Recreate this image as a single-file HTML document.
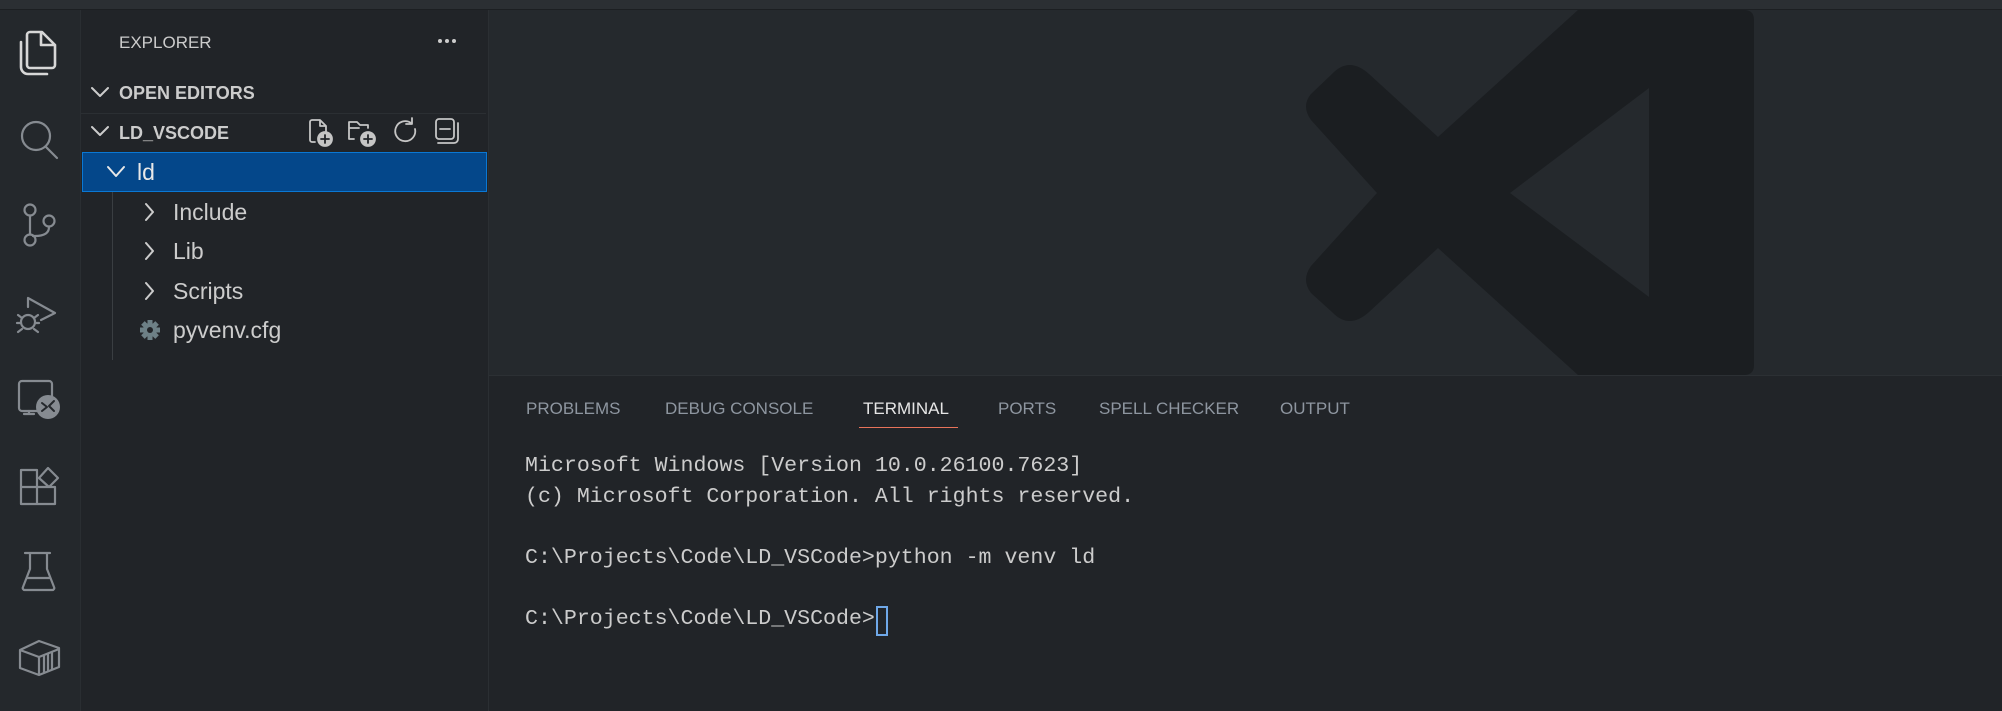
<!DOCTYPE html>
<html><head><meta charset="utf-8"><style>
*{margin:0;padding:0;box-sizing:border-box}
body{width:2002px;height:711px;overflow:hidden;background:#25292d;font-family:"Liberation Sans",sans-serif;position:relative}
.abs{position:absolute}
#top{left:0;top:0;width:2002px;height:10px;background:#2b2f33;border-bottom:1px solid #1c1f22}
#act{left:0;top:10px;width:81px;height:701px;background:#24282c;border-right:1px solid #2a2e32}
#side{left:81px;top:10px;width:408px;height:701px;background:#212428;border-right:1px solid #2b2f33}
#editor{left:489px;top:10px;width:1513px;height:365px;background:#25292d}
#panel{left:489px;top:375px;width:1513px;height:336px;background:#212428;border-top:1px solid #2c3034}
.t{position:absolute;white-space:nowrap;color:#cccccc;line-height:1}
.tab{position:absolute;top:24px;font-size:17px;color:#8e96a0;white-space:nowrap;line-height:1}
.term{position:absolute;left:36px;font-family:"Liberation Mono",monospace;font-size:21.6px;color:#cccccc;white-space:pre;line-height:1}
svg.ic{position:absolute}
</style></head><body>
<div id="top" class="abs"></div>
<div id="act" class="abs">
<svg class="ic" style="left:0;top:-10px" width="81" height="711" fill="none" stroke="#868b91" stroke-width="2.2" stroke-linejoin="round" stroke-linecap="round">
 <g stroke="#d7d7d7" stroke-width="2.6">
  <path d="M30 32 h12 l13 13 v20 a3 3 0 0 1 -3 3 h-22 a3 3 0 0 1 -3 -3 v-30 a3 3 0 0 1 3 -3 z M41 32 v13 h14 M21 42 v25 a7 7 0 0 0 7 7 h19"/>
 </g>
 <circle cx="36" cy="136" r="14"/><path d="M46 147 l11 11"/>
 <circle cx="30" cy="210" r="5.5"/><circle cx="30" cy="240" r="5.5"/><circle cx="49" cy="221" r="5.5"/><path d="M30 216 v18 M49 227 q0 9 -14 9 h-2"/>
 <path d="M28 298 l27 15 l-14 7 M28 298 v9"/><circle cx="28" cy="322" r="7"/><path d="M18 315 l4 3 M38 315 l-4 3 M17 323 h4 M35 323 h4 M18 332 l4 -3 M38 332 l-4 -3"/>
 <rect x="19" y="381" width="33" height="30" rx="3"/><path d="M24 414 h10 M29 411 v3"/>
 <circle cx="48" cy="407" r="12" fill="#868b91" stroke="none"/><path d="M42 403 l5 4 l-5 4 M54 401 l-5 5 l5 5" stroke="#24282c" stroke-width="2"/>
 <path d="M21 470 h16 v34 h-16 z M21 487 h34 v17 h-18 M55 487 v-0 M37 487 v17 M39 478 l9 -10 l10 10 l-9 9 z"/>
 <path d="M25 553 h25 M30 553 v16 l-7 18 a2 2 0 0 0 2 3 h27 a2 2 0 0 0 2 -3 l-7 -18 v-16 M27 578 h23"/>
 <path d="M20 650 l19 -9 l20 7 v19 l-20 8 l-19 -7 z M20 650 l19 7 l20 -8 M39 657 v18 M44 656 v16 M48 654 v16 M52 653 v16"/>
</svg>
</div>
<div id="side" class="abs">
 <div class="t" style="left:38px;top:24px;font-size:17px">EXPLORER</div>
 <svg class="ic" style="left:0;top:0" width="408" height="360" fill="none" stroke="#cccccc" stroke-width="2" stroke-linecap="round" stroke-linejoin="round">
  <g fill="#cccccc" stroke="none"><circle cx="359" cy="31" r="2"/><circle cx="366" cy="31" r="2"/><circle cx="373" cy="31" r="2"/></g>
  <path d="M11 78 l8 8 l8 -8 M11 117 l8 8 l8 -8 M65 194 l7 8 l-7 8 M65 233 l7 8 l-7 8 M65 273 l7 8 l-7 8"/>
  <g stroke="#c5c5c5" stroke-width="1.8">
   <path d="M229 130 v-18 a2 2 0 0 1 2 -2 h8 l6 6 v5 M239 110 v6 h6 M229 130 a2 2 0 0 0 2 2 h3"/><circle cx="244" cy="129" r="7" fill="#c5c5c5"/><path d="M240 129 h8 M244 125 v8" stroke="#212428"/>
   <path d="M268 129 v-17 h8 l3 3 h8 v3 M268 129 h5 M268 118 h10"/><circle cx="287" cy="129" r="7" fill="#c5c5c5"/><path d="M283 129 h8 M287 125 v8" stroke="#212428"/>
   <path d="M330 113 a10 10 0 1 0 4 6 M331 108 v6 h-6"/>
   <rect x="355" y="109" width="18" height="20" rx="3"/><path d="M359 119 h10 M377 113 v16 a4 4 0 0 1 -4 4 h-16"/>
  </g>
 </svg>
 <div class="t" style="left:38px;top:74px;font-size:18px;font-weight:bold">OPEN EDITORS</div>
 <div class="abs" style="left:0;top:103px;width:405px;height:1px;background:#2b2f33"></div>
 <div class="t" style="left:38px;top:114px;font-size:18px;font-weight:bold">LD_VSCODE</div>
 <div class="abs" style="left:1px;top:142px;width:405px;height:40px;background:#04478a;border:1px solid #0a78d4"></div>
 <svg class="ic" style="left:0;top:0" width="408" height="360" fill="none" stroke="#e8e8e8" stroke-width="2" stroke-linecap="round" stroke-linejoin="round"><path d="M27 157 l8 9 l8 -9"/></svg>
 <div class="t" style="left:56px;top:151px;font-size:23px;color:#e8e8e8">ld</div>
 <div class="abs" style="left:31px;top:182px;width:1px;height:168px;background:#3a3e42"></div>
 <div class="t" style="left:92px;top:191px;font-size:23px">Include</div>
 <div class="t" style="left:92px;top:230px;font-size:23px">Lib</div>
 <div class="t" style="left:92px;top:270px;font-size:23px">Scripts</div>
 <svg class="ic" style="left:58px;top:309px" width="22" height="22" viewBox="-11 -11 22 22">
  <g fill="#6d8086"><circle r="7"/><g><rect x="-2.5" y="-10" width="5" height="20"/><rect x="-2.5" y="-10" width="5" height="20" transform="rotate(45)"/><rect x="-2.5" y="-10" width="5" height="20" transform="rotate(90)"/><rect x="-2.5" y="-10" width="5" height="20" transform="rotate(135)"/></g></g>
  <circle r="3" fill="#212428"/>
 </svg>
 <div class="t" style="left:92px;top:309px;font-size:23px">pyvenv.cfg</div>
</div>
<div id="editor" class="abs">
 <svg class="ic" style="left:0;top:0" width="1513" height="365">
  <path fill="#1b1e21" fill-rule="evenodd" d="M1089 0 H1255 Q1265 0 1265 10 V355 Q1265 365 1255 365 H1089 L949 238 L880 302 Q860 320 843 302 L822 283 Q812 270 822 256 L888 183 L822 110 Q812 96 822 84 L843 64 Q860 46 880 64 L949 127 Z M1160 78 V287 L1021 183 Z"/>
 </svg>
</div>
<div id="panel" class="abs">
 <div class="tab" style="left:37px">PROBLEMS</div>
 <div class="tab" style="left:176px">DEBUG CONSOLE</div>
 <div class="tab" style="left:374px;color:#e6e6e6">TERMINAL</div>
 <div class="abs" style="left:370px;top:51px;width:99px;height:1px;background:#e8735a"></div>
 <div class="tab" style="left:509px">PORTS</div>
 <div class="tab" style="left:610px">SPELL CHECKER</div>
 <div class="tab" style="left:791px">OUTPUT</div>
 <div class="term" style="top:80px">Microsoft Windows [Version 10.0.26100.7623]</div>
 <div class="term" style="top:111px">(c) Microsoft Corporation. All rights reserved.</div>
 <div class="term" style="top:172px">C:\Projects\Code\LD_VSCode&gt;python -m venv ld</div>
 <div class="term" style="top:233px">C:\Projects\Code\LD_VSCode&gt;</div>
 <div class="abs" style="left:387px;top:230px;width:12px;height:30px;border:2px solid #6fa8e8"></div>
</div>
</body></html>
